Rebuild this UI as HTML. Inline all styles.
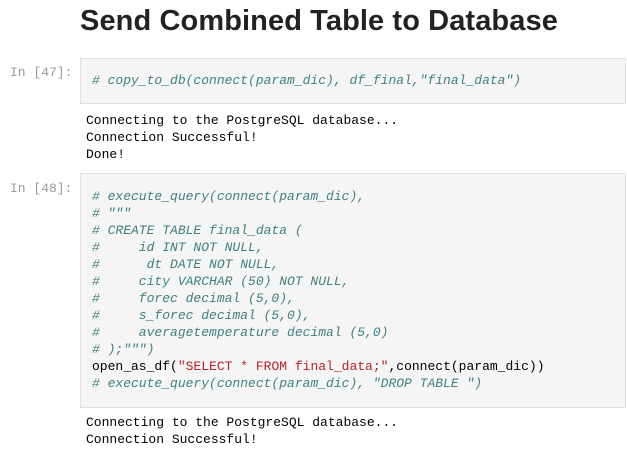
<!DOCTYPE html>
<html><head><style>
body{margin:0;width:627px;height:454px;overflow:hidden;background:#fff;font-family:"Liberation Sans",sans-serif;position:relative}
h1{position:absolute;left:80px;top:5px;margin:0;font-size:29px;font-weight:bold;color:#222;letter-spacing:0.1px}
.lbl{position:absolute;left:10px;font:13px/17px "Liberation Mono",monospace;color:#999}
.cell{position:absolute;left:80px;width:546px;background:#f5f5f5;border:1px solid #e0e0e0;box-sizing:border-box}
pre{margin:0;font:13px/17px "Liberation Mono",monospace;color:#000;white-space:pre}
.c{color:#408080;font-style:italic}
.s{color:#BA2121}
.out{position:absolute;left:86px}
</style></head><body>
<h1>Send Combined Table to Database</h1>
<div class="lbl" style="top:64px">In [47]:</div>
<div class="cell" style="top:58px;height:46px"><pre style="position:absolute;left:11px;top:13px"><span class="c"># copy_to_db(connect(param_dic), df_final,"final_data")</span></pre></div>
<pre class="out" style="top:112px">Connecting to the PostgreSQL database...
Connection Successful!
Done!</pre>
<div class="lbl" style="top:180px">In [48]:</div>
<div class="cell" style="top:173px;height:235px"><pre style="position:absolute;left:11px;top:14px"><span class="c"># execute_query(connect(param_dic),
# """
# CREATE TABLE final_data (
#     id INT NOT NULL,
#      dt DATE NOT NULL,
#     city VARCHAR (50) NOT NULL,
#     forec decimal (5,0),
#     s_forec decimal (5,0),
#     averagetemperature decimal (5,0)
# );""")</span>
open_as_df(<span class="s">"SELECT * FROM final_data;"</span>,connect(param_dic))
<span class="c"># execute_query(connect(param_dic), "DROP TABLE ")</span></pre></div>
<pre class="out" style="top:414px">Connecting to the PostgreSQL database...
Connection Successful!</pre>
</body></html>
